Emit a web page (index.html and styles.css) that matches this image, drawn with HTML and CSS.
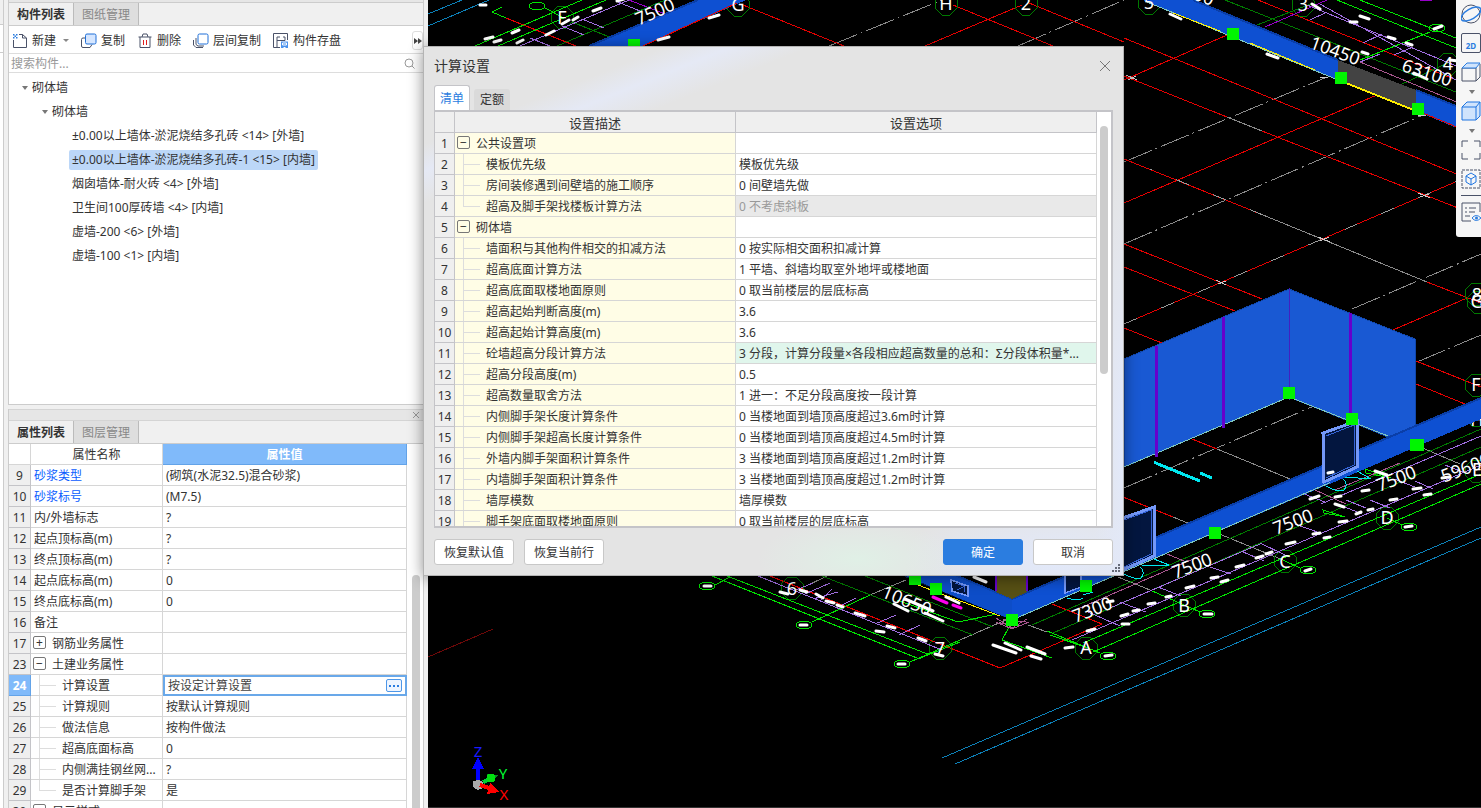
FILE: index.html
```html
<!DOCTYPE html>
<html lang="zh-CN">
<head>
<meta charset="utf-8">
<title>计算设置</title>
<link rel="stylesheet" href="styles.css">
</head>
<body>
<div class="app">
  <div class="rail"><div class="rail-head"></div><div class="rail-tool"></div></div>
  <aside class="sidebar">
    <section class="panel panel-top">
      <div class="grip"></div>
      <div class="tabs">
        <button class="tab active">构件列表</button><button class="tab">图纸管理</button>
      </div>
      <div class="toolbar">
        <button class="tool">
          <svg width="16" height="16" viewBox="0 0 16 16" fill="none"><path d="M1.500 7v7.500h13V5l-4-3.500H7M10.500 1.500V5h4" stroke="#4a5268"/><path d="M1 1h1.500v1.500H1zM4 1h1.500v1.500H4zM2.500 2.500H4V4H2.500zM1 4h1.500v1.500H1zM4 4h1.500v1.500H4z" fill="#2b7de0"/></svg>
          新建<span class="caret"></span></button>
        <button class="tool">
          <svg width="16" height="16" viewBox="0 0 16 16" fill="none"><path d="M4 5H2Q.500 5 .500 6.500V13Q.500 14.500 2 14.500H9L11 11.500" stroke="#4a5268"/><rect x="4.500" y="1" width="10.500" height="10" rx="1.500" fill="#d5e6ff" stroke="#1f6fd8"/></svg>
          复制</button>
        <button class="tool">
          <svg width="16" height="16" viewBox="0 0 16 16" fill="none"><path d="M1.500 4h13M5 4L6 1h4l1 3M3 4v10.500h10V4" stroke="#4a5268"/><path d="M6.500 7v5M9.500 7v5" stroke="#e02020"/></svg>
          删除</button>
        <button class="tool">
          <svg width="16" height="16" viewBox="0 0 16 16" fill="none"><path d="M.500 7v5L3 14.500h7M3 5v6.500L5 13h6" stroke="#4a5268"/><rect x="5" y="1" width="10" height="10" rx="1.500" fill="#fff" stroke="#1f6fd8"/></svg>
          层间复制</button>
        <button class="tool">
          <svg width="16" height="16" viewBox="0 0 16 16" fill="none"><path d="M7 14.500H.500V.500H14.500V7M4 14V4h3M4 7.500h8V4H10" stroke="#4a5268"/><path d="M8 8.500h7V15H8z" fill="#4c93ee"/><path d="M9.500 10h4v2h-4zM10.500 14.500h2" stroke="#fff"/></svg>
          构件存盘</button>
        <button class="more" aria-label="更多"><svg width="8" height="6" viewBox="0 0 8 6"><path d="M0 0l4 3-4 3zM4 0l4 3-4 3z" fill="#444"/></svg></button>
      </div>
      <label class="search"><input type="text" placeholder="搜索构件..." aria-label="搜索构件">
        <svg width="11" height="11" viewBox="0 0 11 11" fill="none" stroke="#999"><circle cx="5" cy="5" r="4"/><path d="M8 8l2.500 2.500"/></svg></label>
      <ul class="tree">
        <li class="lv0"><span class="caret"></span>砌体墙</li>
        <li class="lv1"><span class="caret"></span>砌体墙</li>
        <li class="lv2"><span class="item">±0.00以上墙体-淤泥烧结多孔砖 &lt;14&gt; [外墙]</span></li>
        <li class="lv2"><span class="item selected">±0.00以上墙体-淤泥烧结多孔砖-1 &lt;15&gt; [内墙]</span></li>
        <li class="lv2"><span class="item">烟囱墙体-耐火砖 &lt;4&gt; [外墙]</span></li>
        <li class="lv2"><span class="item">卫生间100厚砖墙 &lt;4&gt; [内墙]</span></li>
        <li class="lv2"><span class="item">虚墙-200 &lt;6&gt; [外墙]</span></li>
        <li class="lv2"><span class="item">虚墙-100 &lt;1&gt; [内墙]</span></li>
      </ul>
    </section>
    <section class="panel panel-props">
      <div class="titlebar"><button aria-label="关闭"><svg width="8" height="8" viewBox="0 0 8 8"><path d="M1 1l6 6M7 1L1 7" stroke="#999"/></svg></button></div>
      <div class="tabs">
        <button class="tab active">属性列表</button><button class="tab">图层管理</button>
      </div>
      <div class="props-body">
        <table class="grid props">
          <colgroup><col class="c-num"><col class="c-name"><col class="c-val"></colgroup>
          <thead><tr><th></th><th>属性名称</th><th class="hl">属性值</th></tr></thead>
          <tbody>
            <tr><th>9</th><td class="link">砂浆类型</td><td>(砌筑(水泥32.5)混合砂浆)</td></tr>
            <tr><th>10</th><td class="link">砂浆标号</td><td>(M7.5)</td></tr>
            <tr><th>11</th><td>内/外墙标志</td><td>?</td></tr>
            <tr><th>12</th><td>起点顶标高(m)</td><td>?</td></tr>
            <tr><th>13</th><td>终点顶标高(m)</td><td>?</td></tr>
            <tr><th>14</th><td>起点底标高(m)</td><td>0</td></tr>
            <tr><th>15</th><td>终点底标高(m)</td><td>0</td></tr>
            <tr><th>16</th><td>备注</td><td></td></tr>
            <tr><th>17</th><td class="group"><button class="tg">+</button>钢筋业务属性</td><td></td></tr>
            <tr><th>23</th><td class="group open"><button class="tg">−</button>土建业务属性</td><td></td></tr>
            <tr><th class="cur">24</th><td class="child">计算设置</td><td class="edit"><div class="editor"><input type="text" value="按设定计算设置" aria-label="计算设置"><button aria-label="浏览"><i></i><i></i><i></i></button></div></td></tr>
            <tr><th>25</th><td class="child">计算规则</td><td>按默认计算规则</td></tr>
            <tr><th>26</th><td class="child">做法信息</td><td>按构件做法</td></tr>
            <tr><th>27</th><td class="child">超高底面标高</td><td>0</td></tr>
            <tr><th>28</th><td class="child">内侧满挂钢丝网...</td><td>?</td></tr>
            <tr><th>29</th><td class="child last">是否计算脚手架</td><td>是</td></tr>
            <tr><th>30</th><td class="group open"><button class="tg">−</button>显示样式</td><td></td></tr>
          </tbody>
        </table>
        <div class="gutter"><div class="thumb-low"></div></div>
      </div>
    </section>
  </aside>
  <main class="canvas">
    <svg class="scene" viewBox="428 0 1053 808" preserveAspectRatio="xMinYMin slice" fill="none">
      <g stroke="#0c80b8">
        <path d="M428 14L462 0M428 26L489 0M942 758L1481 527M955 764L1481 538"/>
      </g>
      <path d="M428 657L493 629" stroke="#6e0808"/>
      <g stroke="#8a8a8a">
        <path stroke-dasharray="30 4 2 4" d="M829 46L942 0M1018 46L1124 0M1124 162L1327 77M1124 244L1423 115M1352 309L1481 254M1417 362L1481 335M1124 488L1314 406"/>
        <path d="M1227 117L1262 131M1263 215L1427 282M1217 449L1290 479M1173 517L1190 524M1217 533L1283 560M1118 577L1150 590M1028 625L1047 632M870 595L906 580M960 640L1008 619M800 589L827 576M1420 447L1460 464"/>
      </g>
      <g stroke="#e60000">
        <path d="M506 18L576 46M743 5L844 46M953 5L1053 46M925 46L1022 5M1029 3L1124 42M1124 38L1481 184M1124 159L1263 215M1124 244L1262 299M1124 267L1235 311M1124 328L1162 343M1124 80L1227 35M1124 76L1227 117M1262 131L1481 217M1124 203L1377 95M1124 324L1481 171M1393 330L1467 298M1427 282L1481 303M1416 361L1481 387M1416 384L1465 404M1187 437L1217 449M1123 497L1173 517M1258 0L1481 90M1052 604L1102 624L1000 668L770 576"/>
      </g>
      <path stroke="#9a9a9a" stroke-dasharray="14 26" d="M1124 324L1481 171M1263 215L1150 169"/>
      <g stroke="#007a00">
        <path d="M557 46L665 0M1225 0L1481 102M822 576L973 635M865 576L993 627M1032 625L1481 429M1053 633L1481 447M1257 25L1313 3M572 22L612 38M1400 85L1450 62"/>
        <path d="M558 6h8l7 7v8l-7 7h-8l-7-7v-8zM734-6h8l7 7v8l-7 7h-8l-7-7v-8zM942-7h8l7 7v8l-7 7h-8l-7-7v-8zM1022-7h8l7 7v8l-7 7h-8l-7-7v-8zM1145-8h8l7 7v8l-7 7h-8l-7-7v-8zM1299-6h8l7 7v8l-7 7h-8l-7-7v-8zM1444 53h8l7 7v8l-7 7h-8l-7-7v-8zM788 577h8l7 7v8l-7 7h-8l-7-7v-8zM936 637h8l7 7v8l-7 7h-8l-7-7v-8zM1082 637h8l7 7v8l-7 7h-8l-7-7v-8zM1180 594h8l7 7v8l-7 7h-8l-7-7v-8zM1281 550h8l7 7v8l-7 7h-8l-7-7v-8zM1383 507h8l7 7v8l-7 7h-8l-7-7v-8zM1472 283h8l7 7v8l-7 7h-8l-7-7v-8zM1474 291h8l7 7v8l-7 7h-8l-7-7v-8zM1472 374h8l7 7v8l-7 7h-8l-7-7v-8zM1472 404h8l7 7v8l-7 7h-8l-7-7v-8zM1472 460h8l7 7v8l-7 7h-8l-7-7v-8z"/>
      </g>
      <g stroke="#00e600">
        <path d="M475 46L582 0M498 46L606 0M502 7L492 12L506 18M545 8L562 17M1337 0L1481 58M1360 0L1481 48M1360 60L1430 32M712 576L917 658M727 576L930 655M715 585L730 577M812 622L870 595M910 662L960 640M918 659L960 642M1083 643L1481 474M1093 652L1481 484M1047 631L1100 653M1050 635L1085 647M1150 590L1200 612M1283 560L1300 568M1387 518L1402 525M897 600L958 622L997 614M1009 627L1002 640L1052 658M1323 510l22 7-21-4zM1365 469l26 9-25-5z"/>
        <ellipse cx="537" cy="6" rx="8" ry="4"/><ellipse cx="1437" cy="28" rx="8" ry="4"/><ellipse cx="707" cy="586" rx="8" ry="4"/><ellipse cx="804" cy="625" rx="8" ry="4"/><ellipse cx="902" cy="664" rx="8" ry="4"/><ellipse cx="1108" cy="656" rx="8" ry="4"/><ellipse cx="1207" cy="614" rx="8" ry="4"/><ellipse cx="1308" cy="570" rx="8" ry="4"/><ellipse cx="1409" cy="527" rx="8" ry="4"/>
      </g>
      <g stroke="#a06ee0">
        <path d="M520 46L629 0M1307 5L1481 76M1310 20L1325 13M1363 43L1382 34M1394 55L1413 47M1360 62L1380 54M1320 4L1481 94M530 38L550 46M562 26L584 35M582 19L604 28M618 2L640 11M758 576L942 650M1072 640L1481 465M1110 608L1260 544M1321 504L1481 436"/>
        <path d="M796 590L813 583M805 594L830 583M813 599L838 592M820 601L832 589M836 608L856 598M875 624L896 615M899 635L920 625M1088 612L1120 626M1120 602L1146 612M1158 587L1181 596M1210 567L1231 574M1241 551L1264 561M1260 543L1285 555M1295 524L1320 533M1340 505L1362 514M1370 500L1390 508M1346 500L1366 508M1394 479L1415 487M1415 481L1433 489M1445 465L1465 473M1304 494L1325 502"/>
      </g>
      <g stroke="#a8558e">
        <path d="M1080 608L1200 556M1335 490L1400 463M1360 62L1481 112M1167 554L1184 561M1315 490L1346 504"/>
        <path d="M996 622l16 7 17-7M996 618l16 10 15-9M998 624l28-3M1003 619l17 7"/>
      </g>
      <path stroke="#9600c8" d="M1265 27L1327 0M629 0L665 14M1420 0l12 0"/>
      <g class="scene-text" fill="#fff"><text x="1477" y="426">H</text></g>
      <path fill="#0e50d2" d="M589 46L698 0H746L643 46zM1143 0H1193L1338 60V80zM1416 90L1481 116V138L1416 111zM903 575H955L1012 598L1481 397V419L1012 620z"/>
      <path stroke="#0a3ea8" stroke-width="2" d="M589 46L698 0M1193 0L1338 60M1416 90L1481 116M955 575L1012 599L1481 398"/>
      <path fill="#434343" d="M1338 60L1416 90V110L1338 80z"/>
      <path fill="#0b49bd" opacity=".5" d="M1012 598V620L905 577V575H955z"/>
      <path stroke="#e60000" d="M643 46L737 3M1418 111L1481 137"/>
      <path stroke="#7fc8c0" d="M1147 2L1338 80M1012 620L1417 445"/>
      <path stroke="#ffee00" d="M1173 13L1220 31M1250 43L1315 70M1417 445L1481 418M910 582L1000 616"/>
      <path stroke="#ffee00" stroke-width="2" d="M1341 81L1416 111"/>
      <path fill="#1959d3" stroke="#1148ae" d="M1124 359L1289 289L1415 339V436L1388 437L1289 397L1124 467z"/>
      <path stroke="#7fc8c0" d="M1124 467L1289 397L1388 436"/>
      <path fill="#0e50d2" d="M1330 462L1481 397V419L1330 484z"/>
      <path stroke="#0a3ea8" stroke-width="2" d="M1345 456L1481 398"/>
      <path stroke="#6600cc" stroke-width="3" d="M1156 346V457M1223 317V428M1350 313V415"/>
      <path stroke="#4420c0" d="M1289 288V400"/>
      <path fill="#575014" d="M996 575H1027V592L1012 599L996 592z"/>
      <path stroke="#6600cc" stroke-width="2" d="M996 575V591M1027 575V591"/>
      <g fill="#03163f" stroke="#7498f8" stroke-width="3">
        <path d="M1323 433L1357 421V467L1324 482zM1120 519L1154 507V556L1120 571z"/>
        <path stroke-width="1.500" d="M1065 574V593L1081 587V574M951 580L968 586V596L952 591z"/>
      </g>
      <path stroke="#3564d8" d="M1326 436L1354 425V465L1326 478M1124 520L1151 510V554L1124 567M955 583l9 3v6M957 590l8-4"/>
      <g stroke="#00e8f0">
        <path stroke-width="3" d="M1154 462l4 2M1158 464L1200 481M1200 473L1212 478"/>
        <path d="M1326 486q12 7 18 4 5-6-1-11M1345 477l26 2-14-8M1124 574q12 6 17 4 5-6-1-11M1142 565l27 0-15-6M1067 598q12 4 16 0M1083 595l10-3"/>
      </g>
      <path class="marks" d="M485 39l8-2M480 5l6 0M494 42l7-2M512 33l7-3M517 43l6-3M546 35l8-4M562 24l7-4M573 20l5-3M593 11l8-3M617 1l7-2M709 18l10-3M658 40l11-3M1170 14l11 5M1267 54l11 4M1312 4l8 5M1350 22l7 0M1360 16l9 3M1388 37l7 2M1406 43l6 2M1362 52l6 2M1434 29l8-3M1414 73l13 6M1450 60l8 1M1310 499l9-3M1335 497l6-1M1335 504l9 3M1339 522l8-1M1356 514l5-2M1368 510l5-1M1362 491l7-1M1390 500l7-1M1413 489l8-1M1424 495l7-1M1442 478l7-1M1375 471l12 4M1328 473l5-1"/>
      <path class="marks" d="M1286 544l9-2M1313 534l7-1M1324 538l6-1M1266 554l6-2M1256 558l7-2M1236 567l8-2M1211 578l7-1M1221 582l7-2M1186 588l8-2M1166 597l5-1M1148 604l7-1M1121 616l7-2M1133 611l6-1M1122 624l7 0M1087 631l8-2M1065 648l8-1M1105 656l7-1M1204 614l8 0M1305 571l6-2M1405 527l7-1M704 586l7 0M800 625l7 0M898 664l7 0M780 592l8 2M800 590l7 2M816 594l7 4M826 601l8 2M837 605l6 2M855 613l10 3M887 626l8 2M876 631l8 1M918 638l8 3M935 654l8 2M894 604l14 7M905 599l28 12M925 613l18 8M946 597l13 6M974 577l12 5M1107 602l6-1M993 645l23 8M1005 643l16 7M1027 647l18 7M1031 656l10 3"/>
      <path class="marks magenta" d="M933 597l14 6M953 605l8 3"/>
      <path stroke="#ccc" d="M1126 75l11 5M1128 80l8-4M1320 77l8 1M1418 116l8-1M1418 193l12 5M1420 197l9-3M1318 237l12 5M1320 241l9-4M1216 280l10 5M1218 284l8-3"/>
      <g class="scene-text" fill="#fff">
        <text x="655" y="18" transform="rotate(-24 655 12)">7500</text>
        <text x="1192" y="-1" transform="rotate(20 1192 -1)">7500</text>
        <text x="1335" y="57" transform="rotate(20 1335 51)">10450</text>
        <text x="1427" y="79" transform="rotate(18 1427 73)">63100</text>
        <text x="907" y="607" transform="rotate(22 907 600)">10650</text>
        <text x="1396" y="485" transform="rotate(-21 1396 478)">7500</text>
        <text x="1293" y="528" transform="rotate(-21 1293 522)">7500</text>
        <text x="1192" y="572" transform="rotate(-21 1192 566)">7500</text>
        <text x="1092" y="616" transform="rotate(-21 1092 609)">7300</text>
        <text x="1466" y="474" transform="rotate(-21 1466 468)">59600</text>
        <text x="562" y="24">F</text><text x="738" y="11">G</text><text x="946" y="10">H</text><text x="1026" y="10">2</text><text x="1149" y="9">5</text><text x="1303" y="11">3</text><text x="1448" y="70">4</text>
        <text x="792" y="595">6</text><text x="940" y="655">7</text><text x="1086" y="654">A</text><text x="1184" y="612">B</text><text x="1285" y="568">C</text><text x="1387" y="524">D</text><text x="1477" y="476">E</text><text x="1476" y="391">F</text><text x="1477" y="301">8</text><text x="1477" y="308">G</text>
      </g>
      <path fill="#00f500" d="M628 39h12v12h-12zM1227 28h12v12h-12zM1335 72h12v12h-12zM1412 103h12v12h-12zM1283 387h12v12h-12zM1346 413h12v12h-12zM1410 439h14v12h-14zM1209 527h12v12h-12zM1080 580h12v12h-12zM1006 614h12v12h-12zM930 583h12v12h-12zM909 573h12v12h-12z"/>
      <path stroke="#00f" stroke-width="4" d="M478 782V768"/><path fill="#00f" d="M472 769L478 757L484 769z"/>
      <path fill="#aaa" d="M473 781l6-1 4 2v6l-5 2-5-3z"/>
      <path stroke="#0c3" stroke-width="4" d="M483 782L490 779"/><path fill="#0a8a20" d="M487 774l11 1-6 8z"/><circle cx="491" cy="778" r="4.500" fill="#00e010"/>
      <path stroke="red" stroke-width="4" d="M480 785L489 788"/><path fill="red" d="M490 783l9 9-12 2z"/>
      <g class="axis-text"><text x="478" y="757" fill="#1a1aff">Z</text><text x="503" y="779" fill="#0f3">Y</text><text x="504" y="800" fill="red">X</text></g>
    </svg>
  </main>
</div>

<nav class="viewbar" aria-label="视图工具">
  <button aria-label="动态观察"><svg width="20" height="20" viewBox="0 0 20 20" fill="none"><circle cx="10" cy="10" r="9" stroke="#4a5268"/><ellipse cx="10" cy="10" rx="11" ry="5" transform="rotate(-30 10 10)" stroke="#2b7de0" stroke-width="1.500"/></svg></button>
  <button class="two-d" aria-label="二维">2D</button>
  <button aria-label="线框"><svg width="20" height="20" viewBox="0 0 20 20" fill="none"><path d="M1 6h14v13H1zM15 19l4-4V2" stroke="#4a5268"/><path d="M1 6l5-5h13l-4 5z" fill="#d0e4fc" stroke="#2b7de0"/></svg></button>
  <span class="caret"></span>
  <button aria-label="实体"><svg width="20" height="20" viewBox="0 0 20 20" fill="#d0e4fc" stroke="#1f75e0"><path d="M1 6l5-5h13v14l-4 4H1zM1 6h14v13M15 6l4-5"/></svg></button>
  <span class="caret"></span>
  <button aria-label="全屏"><svg width="20" height="20" viewBox="0 0 20 20" fill="none" stroke="#4a5268"><path d="M1 7V1h6M13 1h6v6M1 13v6h6M13 19h6v-6"/></svg></button>
  <button aria-label="局部三维"><svg width="20" height="20" viewBox="0 0 20 20" fill="none"><path d="M1 1h18v18H1z" stroke="#4a5268" stroke-dasharray="3 1"/><path d="M10 4l5 3v6l-5 3-5-3V7zM5 7l5 3 5-3M10 10v6" stroke="#1f75e0"/></svg></button>
  <hr>
  <button aria-label="显示设置"><svg width="20" height="20" viewBox="0 0 20 20" fill="none"><path d="M19 10V1H1v18h9M4 6h2M8 6h7M4 10h2M8 10h6M4 14h5" stroke="#4a5268"/><path d="M11 16q4-5 9 0-5 5-9 0z" stroke="#2b7de0"/><circle cx="15.500" cy="16" r="1.500" fill="#2b7de0"/></svg></button>
</nav>

<div class="dialog" role="dialog" aria-labelledby="dlg-title">
  <header><h1 id="dlg-title">计算设置</h1><button class="close" aria-label="关闭"><svg width="12" height="12" viewBox="0 0 12 12"><path d="M1 1l10 10M11 1L1 11" stroke="#777"/></svg></button></header>
  <div class="dlg-tabs"><button class="dlg-tab on">清单</button><button class="dlg-tab">定额</button></div>
  <div class="table-box">
    <table class="grid settings">
      <colgroup><col class="d-num"><col class="d-name"><col class="d-val"></colgroup>
      <thead><tr><th></th><th>设置描述</th><th>设置选项</th></tr></thead>
      <tbody>
        <tr><th>1</th><td class="group open"><button class="tg">−</button>公共设置项</td><td></td></tr>
        <tr><th>2</th><td class="child">模板优先级</td><td>模板优先级</td></tr>
        <tr><th>3</th><td class="child">房间装修遇到间壁墙的施工顺序</td><td>0 间壁墙先做</td></tr>
        <tr><th>4</th><td class="child last">超高及脚手架找楼板计算方法</td><td class="off">0 不考虑斜板</td></tr>
        <tr><th>5</th><td class="group open"><button class="tg">−</button>砌体墙</td><td></td></tr>
        <tr><th>6</th><td class="child">墙面积与其他构件相交的扣减方法</td><td>0 按实际相交面积扣减计算</td></tr>
        <tr><th>7</th><td class="child">超高底面计算方法</td><td>1 平墙、斜墙均取室外地坪或楼地面</td></tr>
        <tr><th>8</th><td class="child">超高底面取楼地面原则</td><td>0 取当前楼层的层底标高</td></tr>
        <tr><th>9</th><td class="child">超高起始判断高度(m)</td><td>3.6</td></tr>
        <tr><th>10</th><td class="child">超高起始计算高度(m)</td><td>3.6</td></tr>
        <tr><th>11</th><td class="child">砼墙超高分段计算方法</td><td class="mint">3 分段，计算分段量×各段相应超高数量的总和：Σ分段体积量*...</td></tr>
        <tr><th>12</th><td class="child">超高分段高度(m)</td><td>0.5</td></tr>
        <tr><th>13</th><td class="child">超高数量取舍方法</td><td>1 进一：不足分段高度按一段计算</td></tr>
        <tr><th>14</th><td class="child">内侧脚手架长度计算条件</td><td>0 当楼地面到墙顶高度超过3.6m时计算</td></tr>
        <tr><th>15</th><td class="child">内侧脚手架超高长度计算条件</td><td>0 当楼地面到墙顶高度超过4.5m时计算</td></tr>
        <tr><th>16</th><td class="child">外墙内脚手架面积计算条件</td><td>3 当楼地面到墙顶高度超过1.2m时计算</td></tr>
        <tr><th>17</th><td class="child">内墙脚手架面积计算条件</td><td>3 当楼地面到墙顶高度超过1.2m时计算</td></tr>
        <tr><th>18</th><td class="child">墙厚模数</td><td>墙厚模数</td></tr>
        <tr><th>19</th><td class="child">脚手架底面取楼地面原则</td><td>0 取当前楼层的层底标高</td></tr>
      </tbody>
    </table>
    <div class="dlg-gutter"><div class="thumb"></div></div>
  </div>
  <footer>
    <button class="btn">恢复默认值</button><button class="btn">恢复当前行</button>
    <span class="fill"></span>
    <button class="btn primary">确定</button><button class="btn">取消</button>
  </footer>
  <svg class="resize" width="9" height="9" viewBox="0 0 9 9"><path fill="#666b78" d="M6 0h2v2H6zM3 3h2v2H3zM6 3h2v2H6zM0 6h2v2H0zM3 6h2v2H3zM6 6h2v2H6z"/></svg>
</div>
</body>
</html>
```
FILE: styles.css
```css
* { box-sizing: border-box; }
body {
  margin: 0;
  overflow: hidden;
  background: #f0f0f0;
  color: #333;
  font: 12px/20px "Noto Sans", "Noto Sans CJK SC", sans-serif;
}
button, input { font: inherit; color: inherit; margin: 0; padding: 0; border: 0; background: none; }
svg { display: block; flex: none; }
.app { display: flex; height: 100vh; }

/* left edge of the neighbouring panel */
.rail { width: 4px; margin-right: 4px; background: #fff; border-right: 1px solid #ccc; }
.rail-head { height: 25px; background: #f0f0f0; border-bottom: 1px solid #ccc; }
.rail-tool { height: 28px; border-bottom: 1px solid #ccc; }

.sidebar { flex: none; width: 416px; margin-right: 4px; display: flex; flex-direction: column; gap: 4px; }
.panel { background: #fff; border: 1px solid #ccc; border-top: 0; display: flex; flex-direction: column; overflow: hidden; }
.panel-top { flex: none; height: calc(50% + 1px); }
.panel-props { flex: 1; min-height: 0; border-bottom: 0; }
.grip { height: 3px; background: #e6e6e6; border-bottom: 1px solid #ccc; }
.titlebar { height: 12px; flex: none; background: #e6e6e6; border: solid #d4d4d4; border-width: 1px 0; display: flex; justify-content: flex-end; align-items: center; padding-right: 3px; }
.tabs { display: flex; flex: none; height: 23px; background: #f0f0f0; border-bottom: 1px solid #ccc; }
.tab { padding: 2px 8px 0; line-height: 20px; background: #dedede; color: #888; border-right: 1px solid #bbb; }
.tab.active { background: #f0f0f0; color: #333; font-weight: bold; }

.toolbar { display: flex; align-items: center; gap: 12px; height: 28px; flex: none; padding: 2px 0 0 3px; border-bottom: 1px solid #ddd; }
.tool { display: flex; align-items: center; gap: 4px; white-space: nowrap; }
.caret { width: 0; height: 0; border: solid transparent; border-width: 4px 3px 0; border-top-color: #777; }
.tool .caret { margin: 0 0 0 3px; border-width: 3px 3px 0; border-top-color: #888; }
.more { margin-left: auto; width: 11px; height: 19px; border: 1px solid #ddd; border-radius: 3px; display: flex; align-items: center; justify-content: center; }
.search { display: flex; align-items: center; height: 19px; flex: none; padding-right: 8px; border-bottom: 1px solid #ddd; }
.search input { flex: 1; padding: 2px 0 0 2px; line-height: 16px; outline: 0; }
.search input::placeholder { color: #999; opacity: 1; }

.tree { list-style: none; margin: 0; padding: 3px 0 0; }
.tree li { display: flex; align-items: center; height: 24px; white-space: nowrap; }
.tree .caret { margin-right: 4px; }
.lv0 { padding-left: 13px; }
.lv1 { padding-left: 33px; }
.lv2 { padding-left: 60px; }
.item { padding: 0 3px; border-radius: 2px; }
.item.selected { background: #bcd7f8; }

.grid { border-collapse: separate; border-spacing: 0; table-layout: fixed; flex: none; }
.grid th, .grid td { height: 21px; padding: 2px 3px 0; line-height: 18px; border: solid #d6d6d6; border-width: 0 1px 1px 0; white-space: nowrap; overflow: hidden; text-align: left; }
.grid th { font-weight: normal; text-align: center; padding: 2px 0 0; }
.grid tbody th { background: #efefef; border-color: #c4c4c8; }
.grid td.group, .grid td.child { position: relative; }
.grid td.group { padding-left: 21px; }
.grid td.child { padding-left: 31px; }
.grid td.child::before { content: ""; position: absolute; left: 8px; top: 0; bottom: 0; border-left: 1px solid #ddd; }
.grid td.child.last::before { bottom: 50%; }
.grid td.child::after { content: ""; position: absolute; left: 8px; top: 50%; width: 17px; border-top: 1px solid #ddd; }
.tg { position: absolute; left: 2px; top: 3px; width: 13px; height: 13px; border: 1px solid #777; border-radius: 2px; background: #fff; line-height: 10px; text-align: center; }
.settings .tg { background: #fffde6; }

.props-body { display: flex; flex: 1; min-height: 0; overflow: hidden; }
.props { width: 398px; align-self: flex-start; }
.c-num { width: 22px; }
.c-name { width: 132px; }
.props .hl { background: #80bafa; color: #fff; border-color: #63a3e8; font-weight: bold; }
.props .link { color: #0a5cff; }
.props tbody th.cur { background: #80bafa; color: #fff; font-weight: bold; border-color: #63a3e8; }
.grid td.edit { padding: 0; border: 0; }
.editor { display: flex; align-items: center; height: 21px; border: 2px solid #69a8e9; padding: 0 3px; }
.editor input { flex: 1; min-width: 0; line-height: 17px; outline: 0; color: #444; }
.editor button { display: flex; align-items: center; justify-content: center; gap: 2px; width: 16px; height: 13px; border: 1px solid #4d97e8; border-radius: 2px; background: #eef5ff; }
.editor i { width: 2px; height: 2px; background: #2b7de0; }
.gutter { flex: 1; display: flex; flex-direction: column; justify-content: flex-end; padding-left: 5px; }
.thumb-low { width: 8px; height: 64%; background: #ccc; border-radius: 4px 4px 0 0; }

.canvas { flex: 1; min-width: 0; background: #000; border-bottom: 1px solid #333; }
.scene { width: 100%; height: 100%; shape-rendering: crispEdges; }
.scene-text { font: 18px "Noto Sans", sans-serif; text-anchor: middle; }
.axis-text { font: 15px "Noto Sans", sans-serif; text-anchor: middle; }
.marks { stroke: #fff; stroke-width: 3; stroke-linecap: round; shape-rendering: auto; }
.magenta { stroke: #f0e; }

.viewbar { position: absolute; right: 0; top: 0; width: 25px; height: 237px; overflow: hidden; background: #f6f6f6; border-radius: 0 0 0 3px; padding: 4px 0 0 5px; display: flex; flex-direction: column; align-items: flex-start; gap: 9px; }
.viewbar .caret { margin: -1px 0 -2px 8px; flex: none; }
.viewbar hr { width: 20px; margin: -3px 0; border: 0; border-top: 1px solid #4a5268; }
.two-d { flex: none; width: 20px; height: 20px; border: 1px solid #4a5268; border-radius: 2px; color: #2b7de0; font-size: 8px; font-weight: bold; line-height: 24px; }

.dialog {
  position: absolute; left: 423px; top: 46px; width: 701px; padding: 0 10px 10px;
  border: 1px solid #b4b4b4;
  background:
    radial-gradient(ellipse 100px 40px at 62% 97%, #e0f0e6 0, transparent 100%),
    radial-gradient(ellipse 150px 60px at 90% 97%, #e2e9fb 0, transparent 100%),
    radial-gradient(ellipse 30px 300px at 100% 75%, #e2e9fb 0, transparent 100%),
    linear-gradient(158deg, transparent 90px, #e5e9f5 115px, transparent 145px),
    #e4e4e4;
  box-shadow: 0 2px 14px rgba(0, 0, 0, .45);
}
.dialog header { display: flex; align-items: center; justify-content: space-between; height: 38px; padding-right: 2px; }
.dialog h1 { margin: 0; font-size: 14px; font-weight: normal; }
.dlg-tabs { display: flex; align-items: flex-end; gap: 4px; height: 25px; }
.dlg-tab { width: 36px; height: 21px; background: #dadada; border-radius: 3px 3px 0 0; }
.dlg-tab.on { height: 25px; padding-top: 2px; background: #fff; color: #2b7de0; border: 1px solid #c4c4c8; border-bottom: 0; }
.table-box { display: flex; height: 418px; overflow: hidden; border: 2px solid #c4c4c8; border-left-width: 1px; background: #fff; }
.settings { width: 662px; align-self: flex-start; }
.d-num { width: 20px; }
.d-name { width: 281px; }
.settings thead th { padding-top: 1px; background: #efefef; font-size: 13px; border-color: #c4c4c8; }
.settings td:nth-child(2) { background: #fffde6; }
.settings td.off { background: #e9e9e9; color: #999; }
.settings td.mint { background: #e0f6ec; }
.dlg-gutter { flex: 1; padding: 14px 3px 0; }
.thumb { height: 248px; background: #ccc; border-radius: 4px; }
.dialog footer { display: flex; gap: 10px; padding-top: 11px; }
.fill { flex: 1; }
.btn { width: 80px; height: 26px; padding-top: 2px; background: #fff; border: 1px solid #c8c8c8; border-radius: 3px; }
.btn.primary { background: #2b7de0; border-color: #2b7de0; color: #fff; }
.resize { position: absolute; right: 2px; bottom: 2px; }
```
